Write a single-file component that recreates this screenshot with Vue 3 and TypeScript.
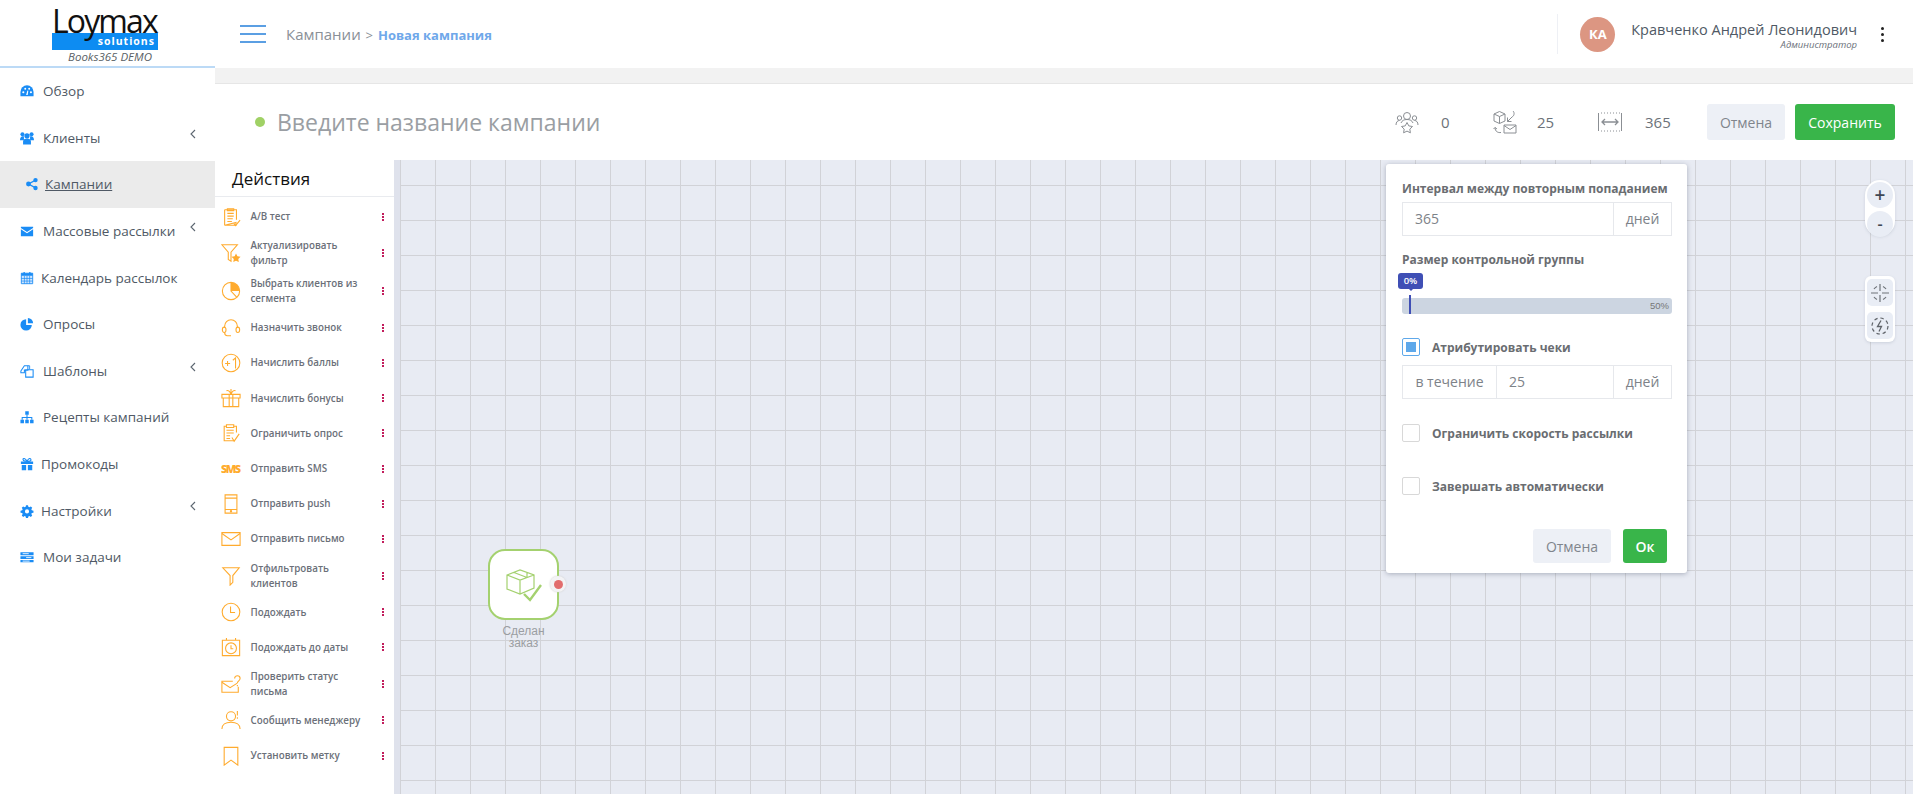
<script setup lang="ts">
interface MenuItem { label: string; icon: string; chevron?: boolean; active?: boolean; tight?: boolean }
interface ActionItem { label: string; icon: string; double?: boolean }

const menu: MenuItem[] = [
  { label: 'Обзор', icon: '<path d="M.5 14V9a7.500 7.500 0 0 1 15 0v5z" fill="currentColor"/><circle cx="3.800" cy="9.500" r="1.200" fill="#fff"/><circle cx="6" cy="5.500" r="1.100" fill="#fff"/><circle cx="10.500" cy="5.500" r="1.100" fill="#fff"/><circle cx="12.500" cy="9.500" r="1.200" fill="#fff"/><path d="M7 12.500l1.500-5 1 .3-.7 4.700z" fill="#fff"/>' },
  { label: 'Клиенты', chevron: true, icon: '<circle cx="8" cy="5.500" r="3" fill="currentColor"/><circle cx="2.800" cy="3.800" r="2.300" fill="currentColor"/><circle cx="13.200" cy="3.800" r="2.300" fill="currentColor"/><path d="M0 10.500c0-3 1.500-4.500 3-4.500h1.500v4.500zM16 10.500c0-3-1.500-4.500-3-4.500h-1.500v4.500z" fill="currentColor"/><path d="M3.500 15.500v-3.500c0-2.500 2-3.500 4.500-3.500s4.500 1 4.500 3.500v3.500z" fill="currentColor"/>' },
  { label: 'Кампании', active: true, icon: '<circle cx="12" cy="3.500" r="2.500" fill="currentColor"/><circle cx="12" cy="12.500" r="2.500" fill="currentColor"/><circle cx="4" cy="8" r="2.800" fill="currentColor"/><path d="M4 8l8-4.500M4 8l8 4.500" stroke="currentColor" stroke-width="1.500"/>' },
  { label: 'Массовые рассылки', chevron: true, icon: '<path d="M1 3h14v1.500L8 9 1 4.500zM1 6l7 4.500L15 6v8H1z" fill="currentColor"/>' },
  { label: 'Календарь рассылок', tight: true, icon: '<path d="M1.500 2.500h13v12h-13z" fill="#cfe5ff" stroke="currentColor"/><path d="M1.500 2.500h13v3h-13zM4 1h1.500v3H4zM10.500 1H12v3h-1.500z" fill="currentColor"/><path d="M1.500 8.500h13M1.500 11.500h13M5 5.500v9M8 5.500v9M11 5.500v9" stroke="currentColor" stroke-width=".8"/>' },
  { label: 'Опросы', icon: '<path d="M7 2.500A6.500 6.500 0 1 0 13.500 9H7z" fill="currentColor"/><path d="M9 1a6 6 0 0 1 6 6H9z" fill="currentColor"/>' },
  { label: 'Шаблоны', chevron: true, icon: '<path d="M1 8l4-6h4v5H5v3H1zM6.500 6.500h8.500V15H6.500z" fill="#fff" stroke="currentColor" stroke-width="1.200"/><path d="M9 2l2 0 0 4" fill="none" stroke="currentColor"/>' },
  { label: 'Рецепты кампаний', icon: '<path d="M6 1.500h4v4H6zM.500 11h4v4h-4zM6 11h4v4H6zM11.500 11h4v4h-4z" fill="currentColor"/><path d="M8 5v6M2.500 11V8.500h11V11" fill="none" stroke="currentColor" stroke-width="1.200"/>' },
  { label: 'Промокоды', tight: true, icon: '<path d="M1 5h14v3H1zM2 9h5v6H2zM9 9h5v6H9z" fill="currentColor"/><path d="M8 5C6 1 3 1 3.500 3S6 5 8 5c2 0 5 0 4.500-2S10 1 8 5z" fill="none" stroke="currentColor" stroke-width="1.300"/>' },
  { label: 'Настройки', chevron: true, tight: true, icon: '<path fill-rule="evenodd" d="M6.800 1h2.400l.4 2 1.300.6 1.700-1.100 1.700 1.700-1.100 1.700.6 1.300 2 .4v2.400l-2 .4-.6 1.300 1.100 1.700-1.700 1.700-1.700-1.100-1.300.6-.4 2H6.800l-.4-2-1.300-.6-1.700 1.100-1.700-1.700 1.100-1.700-.6-1.300-2-.4V7.600l2-.4.6-1.300-1.100-1.700 1.700-1.700 1.700 1.100 1.300-.6zM8 6a2.500 2.500 0 1 0 0 5 2.500 2.500 0 0 0 0-5z" fill="currentColor" transform="translate(.4 .4) scale(.95)"/>' },
  { label: 'Мои задачи', icon: '<path d="M.500 2.500h15v3.500h-15zM.500 7.200h15v3h-15zM.500 11.500h15V14h-15z" fill="currentColor"/><path d="M3 4.200h7M7 8.700h6M3 12.700h8" stroke="#fff" stroke-width="1"/>' },
]

const actions: ActionItem[] = [
  { label: 'А/В тест', icon: '<path d="M4 3h13v11M16.500 17v3H4z"/><path d="M4 3v17M7 2h7v2H7zM7 7h7M7 10h7M7 13h6M7 16h5M14 18l2 2.500 5-6"/>' },
  { label: 'Актуализировать фильтр', double: true, icon: '<path d="M1 2h17l-7 8v10l-3-2v-8z"/><path d="M16.500 11.500l1.600 3.200 3.400.5-2.500 2.400.6 3.400-3.100-1.600-3 1.600.6-3.400-2.500-2.400 3.400-.5z" fill="#ffab2e" stroke="none"/>' },
  { label: 'Выбрать клиентов из сегмента', double: true, icon: '<circle cx="11" cy="11" r="9.500"/><path d="M11 1.500V11l6.500 7" /><path d="M11 1.500A9.500 9.500 0 0 1 20.500 11H11z" fill="#ffab2e" stroke="none"/>' },
  { label: 'Назначить звонок', icon: '<path d="M4 11V9a7 7 0 0 1 14 0v2"/><ellipse cx="3.500" cy="13" rx="2" ry="3"/><ellipse cx="18.500" cy="13" rx="2" ry="3"/><path d="M4 16c0 2.500 1 3.500 3 3.500h4"/>' },
  { label: 'Начислить баллы', icon: '<circle cx="11" cy="11" r="9.700"/><path d="M4.500 11.500h5.500M7.200 8.700v5.500M13 8l3-2.500V17" />' },
  { label: 'Начислить бонусы', icon: '<path d="M1 7h20v4H1zM2.500 11h17v9.500h-17zM9 7v13.500M13 7v13.500M11 7c-1-3-3-5-5-4M11 7c1-3 3-5 5-4M11 7V1"/>' },
  { label: 'Ограничить опрос', icon: '<path d="M6 3.500H3.500v16h11M14 3.500h3v7"/><path d="M6 2h8v3H6zM6 8h8M6 11h8M6 14h4M6 17h4M12 16l2.500 4L20 12"/>' },
  { label: 'Отправить SMS', icon: '<text x="0" y="15.500" font-family="Open Sans,sans-serif" font-weight="800" font-size="12" fill="#ffab2e" stroke="none" textLength="22">SMS</text>' },
  { label: 'Отправить push', icon: '<path d="M4.500 1h13v20h-13zM4.500 4.500h13M4.500 17h13"/><circle cx="11" cy="19" r=".7" fill="#ffab2e"/>' },
  { label: 'Отправить письмо', icon: '<path d="M1 4h20v14H1z"/><path d="M1 5l10 7 10-7"/>' },
  { label: 'Отфильтровать клиентов', double: true, icon: '<path d="M2 2h18l-7 8.500V18l-3 3V10.500z"/>' },
  { label: 'Подождать', icon: '<circle cx="11" cy="11" r="9.700"/><path d="M10.500 5v6.500h5"/>' },
  { label: 'Подождать до даты', icon: '<path d="M1.500 3.500h19v17h-19zM6 1v3M16 1v3"/><circle cx="11" cy="12.500" r="6"/><path d="M11 9v4h2.500"/>' },
  { label: 'Проверить статус письма', double: true, icon: '<path d="M19 14v6H1V8h12"/><path d="M1 9l9 6 8-5M15 5c0-4 6-4 6 0 0 2.500-3 2.500-3 5M18 12v1.500"/>' },
  { label: 'Сообщить менеджеру', icon: '<circle cx="11" cy="7" r="5"/><path d="M1 21c0-5 4-7.500 10-7.500S21 16 21 21M18 1v5M18 8v1.500"/>' },
  { label: 'Установить метку', icon: '<path d="M3.500 1.500h15V21L11 15.500 3.500 21z"/>' },
]
</script>

<template>
  <div class="app">
    <aside class="sidebar">
      <div class="logo">
        <div class="brand">
          <span class="brand-name">Loymax</span>
          <span class="brand-bar">solutions</span>
        </div>
        <div class="brand-sub">Books365 DEMO</div>
      </div>
      <nav class="menu">
        <a v-for="m in menu" :key="m.label" class="menu-row" :class="{ active: m.active, tight: m.tight }">
          <svg class="menu-icon" viewBox="0 0 16 16" v-html="m.icon"></svg>
          <span class="menu-label">{{ m.label }}</span>
          <svg v-if="m.chevron" class="chev" viewBox="0 0 6 10"><path d="M5 1L1 5l4 4" fill="none" stroke="#5c6670" stroke-width="1.100" /></svg>
        </a>
      </nav>
    </aside>

    <main class="main">
      <header class="topbar">
        <div class="burger"><i></i><i></i><i></i></div>
        <div class="crumbs">Кампании <span class="gt">&gt;</span> <b>Новая кампания</b></div>
        <div class="user">
          <div class="avatar">КА</div>
          <div class="user-text">
            <div class="user-name">Кравченко Андрей Леонидович</div>
            <div class="user-role">Администратор</div>
          </div>
          <div class="kebab"><i></i><i></i><i></i></div>
        </div>
      </header>
      <div class="strip"></div>
      <section class="head">
        <span class="dot"></span>
        <span class="title">Введите название кампании</span>
        <div class="stats">
          <svg class="stat-icon" viewBox="0 0 24 22" fill="none" stroke="#8b8f94" stroke-width="1">
            <circle cx="12" cy="5" r="3.500"/><circle cx="4.500" cy="7" r="2.200"/><circle cx="19.500" cy="7" r="2.200"/>
            <path d="M1 14c0-3 1.500-4.500 3.500-4.500M23 14c0-3-1.500-4.500-3.500-4.500M6 12c1-2.500 3-3.500 6-3.500s5 1 6 3.500"/>
            <path d="M12 11.500l1.800 3.400 3.700.6-2.700 2.600.6 3.700-3.400-1.700-3.400 1.700.6-3.700-2.700-2.600 3.700-.6z"/>
          </svg>
          <span class="stat-val v0">0</span>
          <svg class="stat-icon" viewBox="0 0 24 24" fill="none" stroke="#8b8f94" stroke-width="1">
            <path d="M1 4l5.500-2.500L12 4v7l-5.500 2.500L1 11zM1 4l5.500 2.500L12 4M6.500 6.500v7"/>
            <path d="M20 1c2 2 1 5-1 6l-4.500 4.500M14.500 7.500v4h4"/>
            <path d="M11 15h12v8H11zM11 15.500l6 4 6-4"/>
            <path d="M8 22.500c-3 .5-6-1-6-5l-1.500 1.500M2 17.500l2 1.500"/>
          </svg>
          <span class="stat-val v25">25</span>
          <svg class="stat-icon" viewBox="0 0 24 22" fill="none" stroke="#8b8f94" stroke-width="1">
            <path d="M.500 2v18M23.500 2v18"/>
            <path d="M3 2h19M3 20h19" stroke-dasharray="1 2"/>
            <path d="M4 11h16M7 8l-3 3 3 3M17 8l3 3-3 3" stroke-width="1.300"/>
          </svg>
          <span class="stat-val v365">365</span>
        </div>
        <button class="btn ghost head-cancel">Отмена</button>
        <button class="btn green head-save">Сохранить</button>
      </section>

      <div class="work">
        <section class="actions">
          <h3 class="actions-title">Действия</h3>
          <div v-for="a in actions" :key="a.label" class="action" :class="{ double: a.double }">
            <svg class="action-icon" viewBox="0 0 22 22" fill="none" stroke="#ffab2e" stroke-width="1.200" v-html="a.icon"></svg>
            <span class="action-label">{{ a.label }}</span>
            <span class="action-dots"><i></i><i></i><i></i></span>
          </div>
        </section>

        <section class="canvas">
          <div class="node">
            <div class="node-box">
              <svg class="node-icon" viewBox="0 0 38 38" fill="none" stroke="#a4d16f" stroke-width="1.200">
                <path d="M2 8l13-5 14 5v13l-14 6-13-5zM2 8l13 5 14-5M15 13v14M9 5.500l13 5M22 5.500v5"/>
                <path d="M19 27l6 6L36 18" stroke-width="2.400"/>
              </svg>
              <span class="port"><i></i></span>
            </div>
            <div class="node-label">Сделан заказ</div>
          </div>

          <div class="zoom pill">
            <button class="round">+</button>
            <button class="round minus">-</button>
          </div>
          <div class="zoom tools">
            <button class="tool">
              <svg viewBox="0 0 20 20" fill="none" stroke="#6f7379" stroke-width="1.200">
                <path d="M10 1v7M10 12v7M1 10h7M12 10h7"/>
                <path d="M4 6a7.500 7.500 0 0 1 3-2.500M13 3.500A7.500 7.500 0 0 1 16 6M16 14a7.500 7.500 0 0 1-3 2.500M7 16.500A7.500 7.500 0 0 1 4 14"/>
              </svg>
            </button>
            <button class="tool">
              <svg viewBox="0 0 20 20" fill="none" stroke="#5f6369" stroke-width="1.200">
                <circle cx="10" cy="10" r="8" stroke-dasharray="3.500 2.800"/>
                <path d="M11 4.500L7.500 10.500h4L9 15.500" stroke-width="1.300"/>
              </svg>
            </button>
          </div>

          <div class="popup">
            <label class="p-label">Интервал между повторным попаданием</label>
            <div class="group g-first">
              <span class="g-input">365</span>
              <span class="g-addon days">дней</span>
            </div>
            <label class="p-label l-size">Размер контрольной группы</label>
            <div class="slider">
              <span class="tip">0%</span>
              <div class="track"><span class="thumb"></span><span class="max">50%</span></div>
            </div>
            <div class="check-row r1"><span class="check on"><i></i></span><span class="check-label">Атрибутировать чеки</span></div>
            <div class="group g-second">
              <span class="g-addon during">в течение</span>
              <span class="g-input">25</span>
              <span class="g-addon days">дней</span>
            </div>
            <div class="check-row r2"><span class="check"></span><span class="check-label">Ограничить скорость рассылки</span></div>
            <div class="check-row r3"><span class="check"></span><span class="check-label">Завершать автоматически</span></div>
            <div class="p-foot">
              <button class="btn ghost p-cancel">Отмена</button>
              <button class="btn green p-ok">Ок</button>
            </div>
          </div>
        </section>
      </div>
    </main>
  </div>
</template>

<style>
html, body { margin: 0; overflow: hidden; background: #fff; }
</style>

<style scoped>
.app { display: flex; width: 1913px; height: 794px; overflow: hidden; font-family: "Open Sans", sans-serif; color: #4f5965; }
.sidebar { width: 215px; flex: none; background: #fff; }
.logo { height: 66px; border-bottom: 2px solid #bcdaf6; box-sizing: content-box; padding-left: 52px; position: relative; }
.brand { position: relative; width: 106px; height: 50px; }
.brand-name { position: absolute; left: 0; top: 2px; font: 32px/38px "Open Sans", sans-serif; letter-spacing: -1.900px; color: #111; z-index: 2; }
.brand-bar { position: absolute; left: 0; right: 0; top: 33px; height: 17px; background: #0d8cf2; color: #fff; font: 700 10.500px/17px "Open Sans", sans-serif; letter-spacing: 1px; text-align: right; padding-right: 3px; box-sizing: border-box; z-index: 1; }
.brand-sub { margin: 0 0 0 16px; font: italic 11.500px/14px "Open Sans", sans-serif; color: #5a5f66; white-space: nowrap; }
.menu { display: flex; flex-direction: column; }
.menu-row { height: 46.600px; display: flex; align-items: center; padding-left: 20px; font-size: 13.500px; color: #4f5965; position: relative; }
.menu-row.active { background: #ebebeb; padding-left: 25px; }
.menu-row.active .menu-label { text-decoration: underline; margin-left: 6px; }
.menu-row.tight .menu-label { margin-left: 7px; }
.menu-icon { width: 14px; height: 14px; flex: none; color: #1a8cf5; }
.menu-label { margin-left: 9px; white-space: nowrap; }
.chev { position: absolute; left: 190px; top: 14px; width: 6px; height: 10px; }

.main { flex: 1; min-width: 0; display: flex; flex-direction: column; }
.topbar { height: 68px; display: flex; align-items: center; padding-left: 25px; background: #fff; }
.burger { width: 26px; display: flex; flex-direction: column; gap: 6px; }
.burger i { display: block; height: 2px; background: #5b9fe3; }
.crumbs { margin-left: 20px; font-size: 15px; color: #8a9097; white-space: nowrap; }
.crumbs .gt { margin: 0 1px; font-size: 13px; }
.crumbs b { color: #6fa8ea; font-size: 13px; font-weight: 700; }
.user { margin-left: auto; display: flex; align-items: center; height: 40px; border-left: 1px solid #eef0f5; padding-left: 22px; margin-right: 29px; }
.avatar { width: 35px; height: 35px; border-radius: 50%; background: #dc9682; color: #fff; font: 700 13px/35px "Open Sans", sans-serif; text-align: center; }
.user-text { margin: 3px 0 0 16px; text-align: right; }
.user-name { font-size: 14.500px; line-height: 18px; color: #4f5965; white-space: nowrap; }
.user-role { font-size: 9.500px; line-height: 12px; font-style: italic; color: #6a7079; }
.kebab { margin-left: 24px; display: flex; flex-direction: column; gap: 3px; }
.kebab i { display: block; width: 3px; height: 3px; border-radius: 50%; background: #222; }
.strip { height: 16px; background: #f2f2f2; border-bottom: 1px solid #e6e6e6; box-sizing: border-box; }

.head { height: 76px; display: flex; align-items: center; padding-left: 40px; background: #fff; }
.dot { width: 10px; height: 10px; border-radius: 50%; background: #a0d165; flex: none; }
.title { margin-left: 12px; font-size: 23px; color: #9a9ea3; white-space: nowrap; }
.stats { margin-left: auto; display: flex; align-items: center; }
.stat-icon { width: 24px; height: 24px; flex: none; }
.stat-val { font-size: 15px; color: #6c7279; }
.v0 { margin-left: 22px; width: 52px; }
.v25 { margin-left: 20px; width: 61px; }
.v365 { margin-left: 23px; width: 62px; }
.btn { border: 0; border-radius: 3px; font-family: "Open Sans", sans-serif; font-size: 14px; padding: 0; cursor: pointer; }
.ghost { background: #edf0f6; color: #80858c; }
.green { background: #39b54a; color: #fff; }
.head-cancel { width: 78px; height: 36px; margin-left: 0; }
.head-save { width: 100px; height: 36px; margin: 0 18px 0 10px; }

.work { flex: 1; min-height: 0; display: flex; }
.actions { width: 179px; flex: none; background: #fff; font-size: 10px; }
.actions-title { margin: 0; height: 37px; border-bottom: 1px solid #e9ebef; box-sizing: border-box; padding: 7px 0 0 17px; font: 400 17px/24px "Open Sans", sans-serif; color: #111; }
.action { height: 35.200px; display: flex; align-items: center; padding-left: 6px; position: relative; margin-top: 0; }
.action:nth-of-type(1) { margin-top: 2px; }
.action.double { height: 38px; }
.action-icon { width: 20px; height: 20px; flex: none; }
.action-label { width: 122px; margin-left: 9.500px; font-size: 9.800px; line-height: 15px; font-weight: 600; color: #6b7079; }
.action-dots { position: absolute; left: 166.500px; top: 50%; margin-top: -4px; display: flex; flex-direction: column; gap: 1px; }
.action-dots i { display: block; width: 2px; height: 2px; background: #c21d5c; }

.canvas { flex: 1; position: relative; background-color: #e8ebf3;
  background-image: linear-gradient(90deg, #dfe2ec 0, #dfe2ec 6px, transparent 6px), linear-gradient(90deg, transparent 6px, #d1d2d7 6px, #d1d2d7 7px, transparent 7px), linear-gradient(0deg, transparent 34px, #d1d2d7 34px);
  background-size: 100% 100%, 35px 35px, 35px 35px;
  background-position: 0 0, 0 0, 0 -10px;
}
.node { position: absolute; left: 94px; top: 389px; width: 71px; }
.node-box { position: relative; width: 71px; height: 71px; box-sizing: border-box; border: 2.500px solid #a4d16f; border-radius: 17px; background: #fff; }
.node-icon { position: absolute; left: 15px; top: 16px; width: 38px; height: 38px; }
.port { position: absolute; left: 60px; top: 25px; width: 16px; height: 16px; border-radius: 50%; background: #f3f3f5; box-shadow: 0 0 2px #ccc; display: flex; align-items: center; justify-content: center; }
.port i { display: block; width: 9px; height: 9px; border-radius: 50%; background: #e26d6d; }
.node-label { width: 60px; margin: 5px auto 0; font: 12px/12px "Liberation Sans", sans-serif; color: #9b9ea2; text-align: center; }

.zoom { position: absolute; left: 1471px; width: 30px; background: #fff; box-sizing: border-box; display: flex; flex-direction: column; align-items: center; box-shadow: 0 1px 3px rgba(120,130,150,.25); }
.pill { top: 20px; height: 56px; border-radius: 15px; padding-top: 2px; gap: 3px; }
.tools { top: 116px; height: 66px; border-radius: 6px; padding-top: 3px; gap: 6px; }
.round { width: 26px; height: 26px; border: 0; border-radius: 50%; background: #e9edf5; color: #3f4753; font: 600 19px/26px "Open Sans", sans-serif; padding: 0; }
.round.minus { font-size: 16px; }
.tool { width: 26px; height: 27px; border: 0; border-radius: 5px; background: #e9edf5; padding: 3px; display: flex; align-items: center; justify-content: center; }
.tool svg { width: 20px; height: 20px; }

.popup { position: absolute; left: 992px; top: 4px; width: 301px; height: 409px; background: #fff; border-radius: 3px; box-shadow: 0 1px 5px rgba(90,100,120,.45); box-sizing: border-box; padding: 0 15px 0 16px; }
.p-label { display: block; font-size: 12px; line-height: 16px; font-weight: 700; color: #6a6d71; white-space: nowrap; }
.popup > .p-label:first-child { margin-top: 17px; }
.group { display: flex; height: 34px; border: 1px solid #e6e8ec; box-sizing: border-box; font-size: 14px; color: #7d8288; width: 270px; }
.g-first { margin-top: 5px; }
.g-input { flex: 1; line-height: 32px; padding-left: 12px; }
.g-addon { line-height: 31px; border-left: 1px solid #e6e8ec; text-align: center; box-sizing: border-box; }
.days { width: 58px; }
.during { width: 94px; border-left: 0; border-right: 1px solid #e6e8ec; }
.l-size { margin-top: 16px; }
.slider { position: relative; height: 41px; margin-top: 5px; }
.tip { position: absolute; left: -4px; top: 0; width: 25px; height: 16px; border-radius: 3px; background: #3f4fb5; color: #fff; font-size: 9.500px; font-weight: 600; line-height: 15px; text-align: center; }
.tip::after { content: ""; position: absolute; left: 10px; top: 15px; border: 3px solid transparent; border-top-color: #3f4fb5; border-bottom: 0; }
.track { position: absolute; left: 0; top: 25px; width: 270px; height: 16px; border-radius: 3px; background: #ccd5e1; }
.thumb { position: absolute; left: 7px; top: -3px; width: 2px; height: 19px; background: #3f4fb5; }
.max { position: absolute; right: 3px; top: 0; font: 9.500px/16px "Liberation Sans", sans-serif; color: #777; }
.check-row { display: flex; align-items: center; height: 18px; }
.r1 { margin-top: 24px; }
.r2 { margin-top: 25px; }
.r3 { margin-top: 35px; }
.g-second { margin-top: 9px; }
.check { width: 18px; height: 18px; box-sizing: border-box; border: 1px solid #d8d8d8; border-radius: 2px; display: flex; align-items: center; justify-content: center; flex: none; }
.check.on { border-color: #5ea8ea; }
.check.on i { display: block; width: 10px; height: 10px; background: #5ea8ea; }
.check-label { margin-left: 12px; font-size: 12px; font-weight: 700; color: #6a6d71; white-space: nowrap; }
.p-foot { display: flex; justify-content: flex-end; gap: 12px; margin: 34px 5px 0 0; }
.p-cancel { width: 78px; height: 34px; }
.p-ok { width: 44px; height: 34px; font-weight: 600; }
</style>
